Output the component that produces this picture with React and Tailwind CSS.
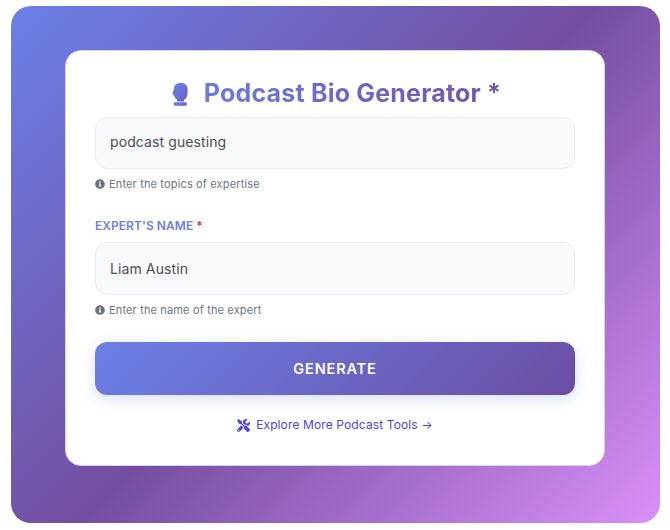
import React, { useState } from 'react';
import { FaInfoCircle, FaTools } from 'react-icons/fa';

const Hint = ({ children }) => (
  <div className="flex items-center gap-[4px] mt-[8px] h-[14px] text-[11px] text-[#6c757d] tracking-[0.15px]">
    <FaInfoCircle size={10} />
    <span>{children}</span>
  </div>
);

export default function App() {
  const [topic, setTopic] = useState('podcast guesting');
  const [name, setName] = useState('Liam Austin');

  return (
    <div className="w-[670px] h-[530px] bg-white pt-[6px] pl-[11px] font-['Inter',sans-serif]">
      <div className="w-[649px] h-[517px] rounded-[20px] bg-[linear-gradient(135deg,#6b80e8_0%,#734ea0_50%,#d98ff8_100%)] pt-[44px] pl-[54px]">
        <div className="w-[540px] h-[416px] bg-white rounded-[16px] border border-[#d9d3e6] px-[29px] pt-[27px]">
          <h1 className="flex items-center justify-center gap-[15px] h-[32px] pl-[2px] text-[25px] font-bold tracking-[0.2px]">
            <svg width="18" height="23" viewBox="0 0 18 23">
              <defs>
                <linearGradient id="mic" x1="0" y1="0" x2="1" y2="1">
                  <stop offset="0" stopColor="#6b80e8" />
                  <stop offset="1" stopColor="#6a62c8" />
                </linearGradient>
              </defs>
              <path fill="url(#mic)" d="M5 1.200C7-.2 12-.3 14 1c1.800 1.200 2.600 3.500 2.700 6 .1 2.600-.3 5-1 7-.5 1.300-1.400 2.200-2.700 2.700v1.800H6v-1.900C4.600 16 4 15 3.600 13.800 3 12.500 1.400 11.500 1.500 9.500 1.600 7.800 2.800 7.500 2.800 6c0-1.800.6-3.700 2.200-4.800z" />
              <path fill="url(#mic)" d="M3.500 19.300h11.500c.6 0 .9 1.100.9 1.900 0 .9-.5 1.500-1.200 1.500H4c-.8 0-1.300-.6-1.300-1.500 0-.8.200-1.900.8-1.900z" />
            </svg>
            <span className="bg-[linear-gradient(90deg,#6b80e8_-15%,#734ea0_115%)] bg-clip-text text-transparent">Podcast Bio Generator *</span>
          </h1>

          <input
            value={topic}
            onChange={e => setTopic(e.target.value)}
            className="block w-[480px] h-[52px] mt-[7px] pl-[14px] pr-[15px] pb-[3px] rounded-[12px] bg-[#f8f9fa] border border-[#e9ecef] text-[14px] text-[#495057] tracking-[0.1px] outline-none"
          />
          <Hint>Enter the topics of expertise</Hint>

          <label className="block mt-[27px] text-[12px] font-semibold text-[#6b80e8] tracking-[0.05px] leading-[15px]">
            EXPERT'S NAME <span className="text-[#dc3545]">*</span>
          </label>
          <input
            value={name}
            onChange={e => setName(e.target.value)}
            className="block w-[480px] h-[53px] mt-[9px] pl-[14px] pr-[15px] pb-[1px] rounded-[12px] bg-[#f8f9fa] border border-[#e9ecef] text-[14px] text-[#495057] tracking-[0.1px] outline-none"
          />
          <Hint>Enter the name of the expert</Hint>

          <button className="block w-[480px] h-[53px] mt-[25px] rounded-[12px] bg-[linear-gradient(135deg,#6b80e8,#6b4ea3)] text-white text-[14.5px] font-semibold tracking-[0.85px] shadow-[0_4px_15px_rgba(102,126,234,0.25)]">
            GENERATE
          </button>

          <div className="flex items-center justify-center gap-[6px] mt-[21px] h-[18px] text-[12px] text-[#4f46d8] tracking-[0.12px]">
            <FaTools size={13} />
            <span>Explore More Podcast Tools →</span>
          </div>
        </div>
      </div>
    </div>
  );
}
